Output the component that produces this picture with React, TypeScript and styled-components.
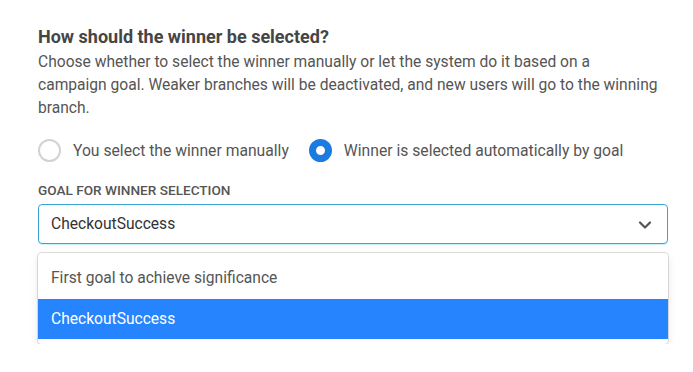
import React, { useState } from "react";
import styled, { createGlobalStyle } from "styled-components";

const GlobalStyle = createGlobalStyle`
  body {
    margin: 0;
    background: #fff;
    font-family: Roboto, "Liberation Sans", Arial, sans-serif;
    color: #555;
  }
`;

const options = ["First goal to achieve significance", "CheckoutSuccess"];

const App = () => {
  const [mode, setMode] = useState<"manual" | "auto">("auto");
  const [goal, setGoal] = useState("CheckoutSuccess");

  return (
    <>
      <GlobalStyle />
      <Section>
        <TitleH3>How should the winner be selected?</TitleH3>
        <DescP>
          Choose whether to select the winner manually or let the system do it
          based on a
          <br />
          campaign goal. Weaker branches will be deactivated, and new users will
          go to the winning branch.
        </DescP>

        <RadioRow>
          <RadioLabel onClick={() => setMode("manual")}>
            <RadioDot checked={mode === "manual"} />
            You select the winner manually
          </RadioLabel>
          <RadioLabel onClick={() => setMode("auto")}>
            <RadioDot checked={mode === "auto"} />
            Winner is selected automatically by goal
          </RadioLabel>
        </RadioRow>

        <FieldLabel>Goal for winner selection</FieldLabel>
        <SelectBox>
          <span>{goal}</span>
          <svg width="14" height="14" viewBox="0 0 14 14">
            <polyline
              points="2,4.5 7,9.5 12,4.5"
              fill="none"
              stroke="#555"
              strokeWidth="2.2"
              strokeLinecap="round"
              strokeLinejoin="round"
            />
          </svg>
        </SelectBox>

        <Menu>
          {options.map((o) => (
            <Option key={o} selected={o === goal} onClick={() => setGoal(o)}>
              {o}
            </Option>
          ))}
        </Menu>
      </Section>
    </>
  );
};

export default App;

const Section = styled.section`
  width: 630px;
  padding: 26px 0 0 38px;
`;

const TitleH3 = styled.h3`
  margin: 0;
  font-size: 18px;
  line-height: 22px;
  font-weight: 700;
  color: #454545;
`;

const DescP = styled.p`
  margin: 3px 0 0;
  font-size: 15.6px;
  line-height: 23px;
  color: #555;
`;

const RadioRow = styled.div`
  display: flex;
  align-items: center;
  gap: 20px;
  margin-top: 18px;
  height: 24px;
`;

const RadioLabel = styled.label`
  display: flex;
  align-items: center;
  gap: 12px;
  font-size: 15.7px;
  color: #555;
  cursor: pointer;
`;

const RadioDot = styled.span<{ checked: boolean }>`
  box-sizing: border-box;
  width: 23px;
  height: 23px;
  border-radius: 50%;
  background: #fff;
  border: ${({ checked }) => (checked ? "7px solid #1a7be0" : "2px solid #d2d2d2")};
`;

const FieldLabel = styled.div`
  margin-top: 20px;
  font-size: 13.6px;
  line-height: 16px;
  font-weight: 500;
  text-transform: uppercase;
  color: #555;
`;

const SelectBox = styled.div`
  box-sizing: border-box;
  margin-top: 6px;
  height: 40px;
  display: flex;
  align-items: center;
  justify-content: space-between;
  padding: 0 15px 0 12px;
  border: 1px solid #3aa3d6;
  border-radius: 4px;
  box-shadow: 0 1px 0 #c9f6fb;
  font-size: 15.6px;
  color: #333;

  svg {
    margin-top: 2px;
  }
`;

const Menu = styled.div`
  margin-top: 9px;
  padding: 4px 0 5px;
  border-radius: 4px;
  background: #fff;
  box-shadow: 0 0 0 1px rgba(0, 0, 0, 0.12), 0 3px 9px rgba(0, 0, 0, 0.1);
`;

const Option = styled.div<{ selected: boolean }>`
  padding: 0 13px;
  height: ${({ selected }) => (selected ? "40px" : "42px")};
  display: flex;
  align-items: center;
  font-size: 15.6px;
  background: ${({ selected }) => (selected ? "#2684ff" : "#fff")};
  color: ${({ selected }) => (selected ? "#fff" : "#555")};
  cursor: pointer;
`;
